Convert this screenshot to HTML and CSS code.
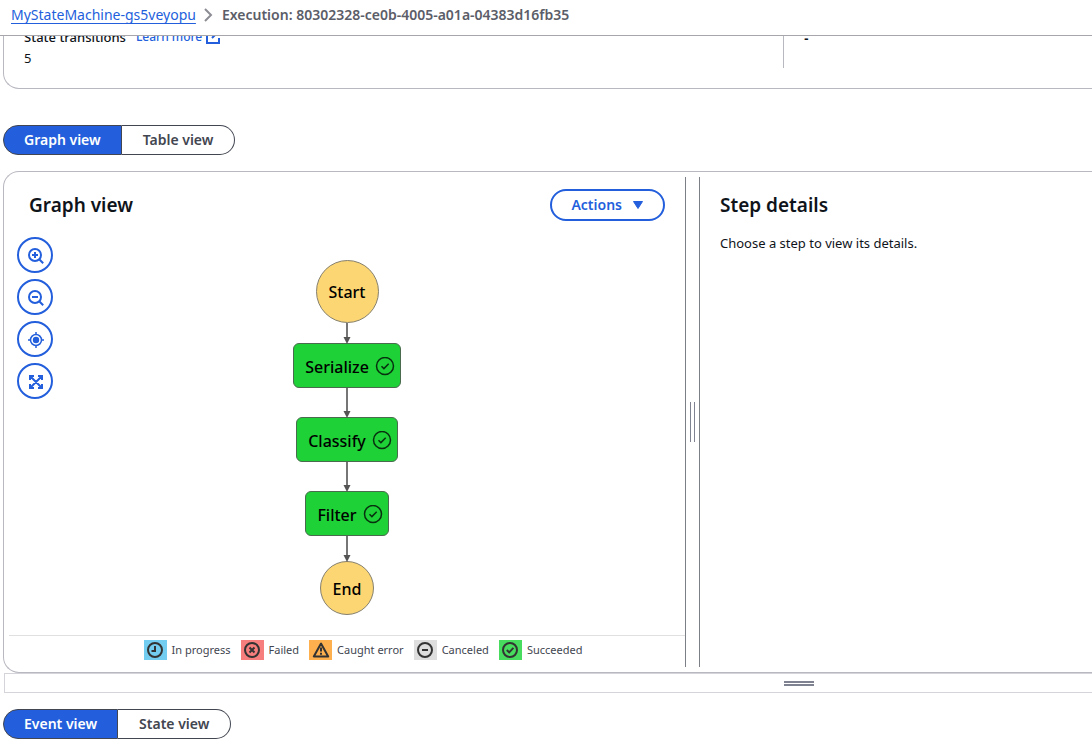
FILE: index.html
```html
<!DOCTYPE html>
<html lang="en">
<head>
<meta charset="utf-8">
<title>Execution details</title>
<link rel="stylesheet" href="styles.css">
</head>
<body>
<header class="topbar">
  <nav class="crumbs" aria-label="Breadcrumbs">
    <a class="crumb-link" href="#">MyStateMachine-gs5veyopu</a>
    <svg class="crumb-sep" width="10" height="14" viewBox="0 0 10 14" fill="none" stroke="#8c8c94" stroke-width="2"><path d="M1 1l6 6-6 6"/></svg>
    <span class="crumb-current">Execution: 80302328-ce0b-4005-a01a-04383d16fb35</span>
  </nav>
</header>
<main class="page">
  <section class="summary">
    <div class="summary-col">
      <div class="summary-label">State transitions
        <a class="learn" href="#">Learn more
          <svg width="14" height="14" viewBox="0 0 14 14" fill="none" stroke="currentColor" stroke-width="2"><path d="M6 1H1v12h12V8M8 1h5v5M13 1L6 8"/></svg></a>
      </div>
      <div class="summary-value">5</div>
    </div>
    <div class="summary-col summary-col-next"><div class="summary-dash">-</div></div>
  </section>

  <div class="segments segments-graph">
    <button class="segment segment-on" type="button">Graph view</button>
    <button class="segment" type="button">Table view</button>
  </div>

  <section class="panel">
    <div class="graph">
      <div class="graph-head">
        <h2 class="title">Graph view</h2>
        <button class="actions" type="button">Actions
          <svg width="12" height="10" viewBox="0 0 12 10"><path d="M1.500 1.500h9L6 8.500z" fill="currentColor" stroke="currentColor" stroke-linejoin="round"/></svg>
        </button>
      </div>
      <div class="canvas">
        <div class="tools">
          <button class="tool" type="button" aria-label="Zoom in"><svg width="16" height="16" viewBox="0 0 16 16" fill="none" stroke="currentColor" stroke-width="2"><circle cx="7" cy="7" r="6"/><path d="M11.200 11.200l4 4M7 4v6M4 7h6"/></svg></button>
          <button class="tool" type="button" aria-label="Zoom out"><svg width="16" height="16" viewBox="0 0 16 16" fill="none" stroke="currentColor" stroke-width="2"><circle cx="7" cy="7" r="6"/><path d="M11.200 11.200l4 4M4 7h6"/></svg></button>
          <button class="tool" type="button" aria-label="Center graph"><svg width="16" height="16" viewBox="0 0 16 16" fill="none" stroke="currentColor" stroke-width="1.500"><circle cx="8" cy="8" r="5.500"/><circle cx="8" cy="8" r="3.200" fill="currentColor" stroke="none"/><path d="M8 0v2.500M8 13.500V16M0 8h2.500M13.500 8H16"/></svg></button>
          <button class="tool" type="button" aria-label="Fit to screen"><svg width="16" height="16" viewBox="0 0 16 16" fill="none" stroke="currentColor" stroke-width="2"><path d="M2 6V2h4M10 2h4v4M14 10v4h-4M6 14H2v-4M2 2l12 12M14 2L2 14"/></svg></button>
        </div>
        <div class="flow">
          <div class="node-round node-start">Start</div>
          <svg class="edge" width="8" height="20" viewBox="0 0 8 20"><path d="M4 0v14" stroke="#545454" stroke-width="1.600"/><path d="M.5 14h7l-3.500 7z" fill="#545454"/></svg>
          <div class="node">Serialize<svg width="20" height="20" viewBox="0 0 20 20" fill="none" stroke="#08300f" stroke-width="1.500"><circle cx="10" cy="9" r="8.500"/><path d="M6.500 9.200l2.400 2.400 4.800-4.800"/></svg></div>
          <svg class="edge" width="8" height="29" viewBox="0 0 8 29"><path d="M4 0v23" stroke="#545454" stroke-width="1.600"/><path d="M.5 23h7l-3.500 7z" fill="#545454"/></svg>
          <div class="node">Classify<svg width="20" height="20" viewBox="0 0 20 20" fill="none" stroke="#08300f" stroke-width="1.500"><circle cx="10" cy="9" r="8.500"/><path d="M6.500 9.200l2.400 2.400 4.800-4.800"/></svg></div>
          <svg class="edge" width="8" height="29" viewBox="0 0 8 29"><path d="M4 0v23" stroke="#545454" stroke-width="1.600"/><path d="M.5 23h7l-3.500 7z" fill="#545454"/></svg>
          <div class="node">Filter<svg width="20" height="20" viewBox="0 0 20 20" fill="none" stroke="#08300f" stroke-width="1.500"><circle cx="10" cy="9" r="8.500"/><path d="M6.500 9.200l2.400 2.400 4.800-4.800"/></svg></div>
          <svg class="edge" width="8" height="25" viewBox="0 0 8 25"><path d="M4 0v19" stroke="#545454" stroke-width="1.600"/><path d="M.5 19h7l-3.500 7z" fill="#545454"/></svg>
          <div class="node-round node-end">End</div>
        </div>
      </div>
      <ul class="legend">
        <li class="legend-item"><span class="swatch swatch-progress"><svg width="16" height="16" viewBox="0 0 16 16" fill="none" stroke="#333" stroke-width="2"><circle cx="8" cy="8" r="7"/><path d="M8 4v5H4.500"/></svg></span>In progress</li>
        <li class="legend-item"><span class="swatch swatch-failed"><svg width="16" height="16" viewBox="0 0 16 16" fill="none" stroke="#333" stroke-width="2"><circle cx="8" cy="8" r="7"/><path d="M5.500 5.500l5 5M10.500 5.500l-5 5"/></svg></span>Failed</li>
        <li class="legend-item"><span class="swatch swatch-caught"><svg width="18" height="16" viewBox="0 0 18 16" fill="none" stroke="#333" stroke-width="2" stroke-linejoin="round"><path d="M9 1.500L1.800 14.500h14.400zM9 5.500v4M9 10.800v2"/></svg></span>Caught error</li>
        <li class="legend-item"><span class="swatch swatch-canceled"><svg width="16" height="16" viewBox="0 0 16 16" fill="none" stroke="#333" stroke-width="2"><circle cx="8" cy="8" r="7"/><path d="M5 8h6"/></svg></span>Canceled</li>
        <li class="legend-item"><span class="swatch swatch-ok"><svg width="16" height="16" viewBox="0 0 16 16" fill="none" stroke="#333" stroke-width="2"><circle cx="8" cy="8" r="7"/><path d="M4.800 8l2.400 2.400 4.200-4.600"/></svg></span>Succeeded</li>
      </ul>
    </div>
    <div class="splitter" role="separator" aria-orientation="vertical"><span class="grip-v"></span></div>
    <aside class="details">
      <h2 class="title">Step details</h2>
      <p class="details-text">Choose a step to view its details.</p>
    </aside>
  </section>
  <div class="resize" role="separator"><span class="grip-h"></span></div>

  <div class="segments segments-events">
    <button class="segment segment-on" type="button">Event view</button>
    <button class="segment" type="button">State view</button>
  </div>
</main>
</body>
</html>
```
FILE: styles.css
```css
* { box-sizing: border-box; }
body {
  margin: 0;
  background: #fff;
  color: #0f141a;
  font: 13px/20px "Noto Sans", "Open Sans", sans-serif;
  overflow: hidden;
}
button { font: inherit; cursor: pointer; }
svg { flex: none; }
.topbar {
  position: sticky;
  top: 0;
  z-index: 2;
  height: 36px;
  padding: 5px 11px;
  background: #fff;
  border-bottom: 1px solid #a6a6ab;
}
.crumbs { display: flex; align-items: center; gap: 8px; white-space: nowrap; font-size: 14px; }
.crumb-link { color: #235fdc; text-underline-offset: 3px; }
.crumb-current { color: #5b5d68; font-weight: 600; }
.page { padding-left: 3px; }
.summary {
  display: grid;
  grid-template-columns: 780fr 309fr;
  margin-top: -20px;
  padding: 11px 0 20px;
  border: solid #b8b8c0;
  border-width: 0 0 1px 1px;
  border-bottom-left-radius: 16px;
}
.summary-col { padding-left: 20px; }
.summary-col-next { border-left: 1px solid #b8b8c0; }
.summary-label { display: flex; align-items: center; gap: 10px; height: 20px; font-weight: 500; }
.summary-value { height: 21px; line-height: 22px; }
.summary-dash { line-height: 22px; font-weight: 700; }
.learn { display: flex; align-items: center; gap: 4px; color: #235fdc; font-size: 12px; text-decoration: none; }
.segments { display: flex; width: max-content; }
.segments-graph { margin-top: 36px; }
.segments-events { margin-top: 16px; }
.segment {
  height: 30px;
  padding: 0 21px;
  background: #fff;
  color: #424650;
  border: 1px solid #424650;
  border-left: 0;
  border-radius: 0 15px 15px 0;
  font-size: 14px;
  font-weight: 600;
}
.segment-on {
  padding: 0 20px;
  background: #235fdc;
  color: #fff;
  border-left: 1px solid #424650;
  border-radius: 15px 0 0 15px;
}
.panel {
  display: grid;
  grid-template-columns: 676fr 15px 392fr;
  margin-top: 16px;
  padding: 5px 0 5px 5px;
  border: solid #b8b8c0;
  border-width: 1px 0 1px 1px;
  border-radius: 16px 0 0 16px;
}
.graph { min-width: 0; }
.graph-head {
  display: flex;
  align-items: center;
  justify-content: space-between;
  padding: 12px 20px 0;
}
.title { margin: 0; font-size: 19px; line-height: 32px; font-weight: 600; }
.actions {
  display: flex;
  align-items: center;
  gap: 10px;
  height: 32px;
  padding: 0 19px;
  background: #fff;
  color: #235fdc;
  border: 2px solid #235fdc;
  border-radius: 16px;
  font-size: 14px;
  font-weight: 600;
}
.canvas { position: relative; padding: 39px 0 20px; }
.tools {
  position: absolute;
  top: 16px;
  left: 8px;
  display: flex;
  flex-direction: column;
  gap: 6px;
}
.tool {
  display: flex;
  align-items: center;
  justify-content: center;
  width: 36px;
  height: 36px;
  padding: 1px 0 0 1px;
  background: #fff;
  color: #235fdc;
  border: 2px solid #235fdc;
  border-radius: 50%;
}
.flow {
  display: flex;
  flex-direction: column;
  align-items: center;
  color: #000;
  font-size: 16px;
  font-weight: 500;
}
.edge { position: relative; z-index: 1; overflow: visible; }
.node-round {
  display: flex;
  align-items: center;
  justify-content: center;
  background: #fcd672;
  border: 1px solid #85806f;
  border-radius: 50%;
}
.node-start { width: 63px; height: 63px; }
.node-end { width: 54px; height: 54px; padding-top: 2px; }
.node {
  display: flex;
  align-items: center;
  gap: 6px;
  height: 45px;
  padding: 2px 5px 0 11px;
  background: #1dd137;
  border: 1px solid #4a6b4e;
  border-radius: 6px;
}
.legend {
  display: flex;
  justify-content: center;
  gap: 10px;
  margin: 0;
  padding: 4px 0 7px 32px;
  border-top: 1px solid #e0e0e3;
  list-style: none;
  color: #424650;
  font-size: 11px;
  white-space: nowrap;
}
.legend-item { display: flex; align-items: center; gap: 5px; }
.swatch {
  display: flex;
  align-items: center;
  justify-content: center;
  width: 23px;
  height: 20px;
}
.swatch-progress { background: #73cdf0; }
.swatch-failed { background: #f67e7d; }
.swatch-caught { background: #feb04e; }
.swatch-canceled { background: #dedede; }
.swatch-ok { background: #48dc5e; }
.splitter {
  display: flex;
  align-items: center;
  justify-content: center;
  border: solid #7d7f86;
  border-width: 0 1px;
}
.grip-v { width: 5px; height: 40px; border: solid #7f8290; border-width: 0 1px; }
.details { padding: 12px 0 0 20px; }
.details-text { margin: 12px 0 0; }
.resize {
  display: flex;
  align-items: center;
  height: 20px;
  margin-left: 1px;
  padding: 1px 0 0 71.5%;
  border: solid #d4d4da;
  border-width: 1px 0 1px 1px;
}
.grip-h { width: 30px; height: 5px; border: solid #7f8290; border-width: 2px 0; }
```
